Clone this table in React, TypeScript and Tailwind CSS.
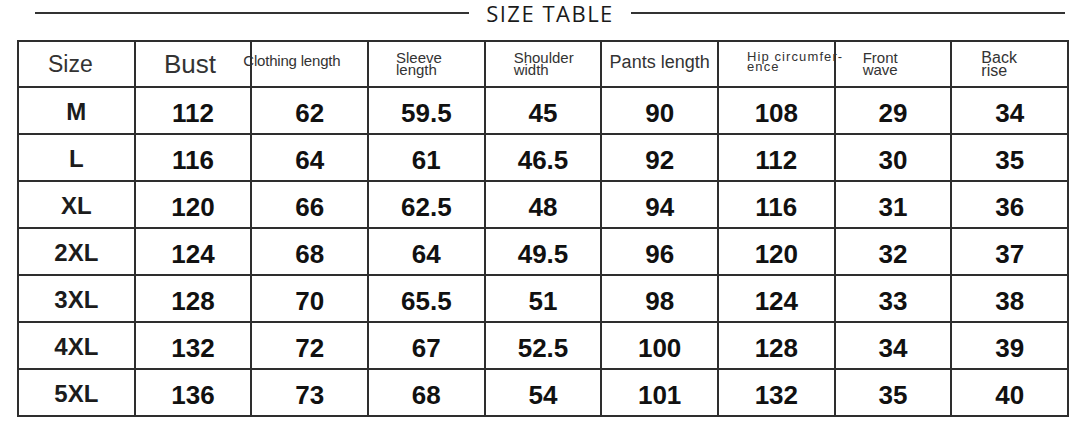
const rows: string[][] = [
  ["M", "112", "62", "59.5", "45", "90", "108", "29", "34"],
  ["L", "116", "64", "61", "46.5", "92", "112", "30", "35"],
  ["XL", "120", "66", "62.5", "48", "94", "116", "31", "36"],
  ["2XL", "124", "68", "64", "49.5", "96", "120", "32", "37"],
  ["3XL", "128", "70", "65.5", "51", "98", "124", "33", "38"],
  ["4XL", "132", "72", "67", "52.5", "100", "128", "34", "39"],
  ["5XL", "136", "73", "68", "54", "101", "132", "35", "40"],
];

const HeaderRow = () => (
  <>
    <div className="bg-white flex items-center justify-center pr-[12px] text-[23px] text-[#333]">Size</div>
    <div className="bg-white flex items-center justify-center pr-[6px] text-[26px] text-[#333]">Bust</div>
    <div className="bg-white flex items-center pb-[5px] text-[15px] text-[#333] whitespace-nowrap">
      <span className="relative z-10 -ml-[9px] tracking-[-0.2px]">Clothing length</span>
    </div>
    <div className="bg-white flex items-center pl-[27px] text-[15px] leading-[12px] text-[#333]">
      <span>Sleeve<br />length</span>
    </div>
    <div className="bg-white flex items-center pl-[28px] text-[15px] leading-[12px] text-[#333]">
      <span>Shoulder<br />width</span>
    </div>
    <div className="bg-white flex items-center justify-center pb-[3px] text-[18px] text-[#333] whitespace-nowrap">Pants length</div>
    <div className="bg-white flex items-center pl-[28px] pb-[5px] text-[13px] leading-[10px] tracking-[1.1px] text-[#333] whitespace-nowrap">
      <span className="relative z-10">Hip circumfer-<br />ence</span>
    </div>
    <div className="bg-white flex items-center pl-[27px] text-[15px] leading-[12px] text-[#333]">
      <span>Front<br />wave</span>
    </div>
    <div className="bg-white flex items-center pl-[29px] text-[16px] leading-[13px] text-[#333]">
      <span>Back<br />rise</span>
    </div>
  </>
);

export default function App() {
  return (
    <div className="w-[1077px] h-[422px] bg-white overflow-hidden font-['Liberation_Sans',Arial,sans-serif]">
      <div className="h-[26px] flex items-center gap-[17px] pl-[35px] pr-[12px]">
        <div className="flex-1 h-[1.5px] bg-[#333]" />
        <div className="font-['Open_Sans',sans-serif] text-[22px] leading-[26px] tracking-[1.5px] text-[#1a1a1a]">SIZE TABLE</div>
        <div className="flex-1 h-[1.5px] bg-[#333]" />
      </div>
      <div className="mt-[14px] ml-[17px] w-[1052px] grid grid-cols-9 grid-rows-[44px_repeat(7,45px)] gap-[2px] p-[2px] bg-[#2e2e2e]">
        <HeaderRow />
        {rows.map((row) =>
          row.map((cell, i) =>
            i === 0 ? (
              <div key={row[0] + i} className="bg-white flex items-center justify-center pt-[2px] text-[24px] font-bold text-[#1c1c1c]">
                {cell}
              </div>
            ) : (
              <div key={row[0] + i} className="bg-white flex items-center justify-center pt-[6px] text-[26px] font-bold text-[#111]">
                {cell}
              </div>
            )
          )
        )}
      </div>
    </div>
  );
}
